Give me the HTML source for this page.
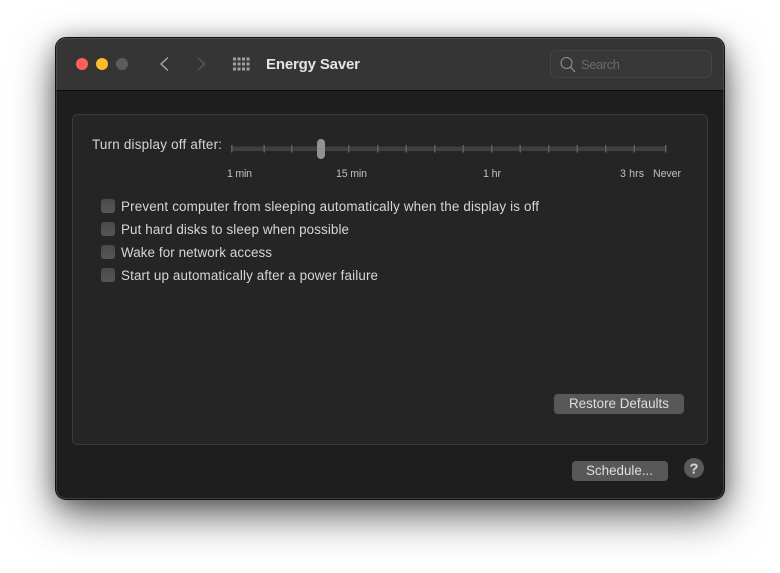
<!DOCTYPE html>
<html><head><meta charset="utf-8"><title>Energy Saver</title>
<style>
html,body{margin:0;padding:0;background:#fff;width:780px;height:573px;overflow:hidden}
#win{position:absolute;left:56px;top:38px;width:668px;height:461px;border-radius:10px;background:#1e1e1e;box-shadow:0 16px 42px rgba(0,0,0,.62),0 2px 20px rgba(0,0,0,.3)}
svg{position:absolute;left:0;top:0}
text{font-family:"Liberation Sans",sans-serif;font-size:13.4px;fill:#d6d6d6}
.s{font-size:10.6px;fill:#c0c0c0}
</style></head><body>
<div id="win"></div>
<svg width="780" height="573" viewBox="0 0 780 573">
<defs>
<clipPath id="w"><rect x="56" y="38" width="668" height="461" rx="10"/></clipPath>
<linearGradient id="cb" x1="0" y1="0" x2="0" y2="1"><stop offset="0" stop-color="#4a4a4a"/><stop offset="1" stop-color="#565656"/></linearGradient>
</defs>
<g clip-path="url(#w)">
<rect x="56" y="38" width="668" height="52" fill="#353535"/>
<rect x="56" y="90" width="668" height="1" fill="#0c0c0c"/>
<rect x="56" y="91" width="668" height="408" fill="#1e1e1e"/>
</g>
<rect x="55.500" y="37.500" width="669" height="462" rx="10.500" fill="none" stroke="#111" stroke-width="1"/>
<rect x="56.500" y="38.500" width="667" height="460" rx="9.500" fill="none" stroke="#5a5a5a" stroke-opacity=".55" stroke-width="1"/>

<!-- traffic lights -->
<circle cx="82" cy="64" r="6" fill="#fe5f57"/>
<circle cx="102" cy="64" r="6" fill="#fdbc2e"/>
<circle cx="122" cy="64" r="6" fill="#5c5c5c"/>

<!-- nav -->
<path d="M168 57.500 L161 64 L168 70.500" fill="none" stroke="#a8a8a8" stroke-width="1.400"/>
<path d="M197.500 57.500 L204.500 64 L197.500 70.500" fill="none" stroke="#565656" stroke-width="1.400"/>
<g fill="#a0a0a0">
<rect x="233" y="57.500" width="3" height="3"/><rect x="237.500" y="57.500" width="3" height="3"/><rect x="242" y="57.500" width="3" height="3"/><rect x="246.500" y="57.500" width="3" height="3"/>
<rect x="233" y="62.500" width="3" height="3"/><rect x="237.500" y="62.500" width="3" height="3"/><rect x="242" y="62.500" width="3" height="3"/><rect x="246.500" y="62.500" width="3" height="3"/>
<rect x="233" y="67.500" width="3" height="3"/><rect x="237.500" y="67.500" width="3" height="3"/><rect x="242" y="67.500" width="3" height="3"/><rect x="246.500" y="67.500" width="3" height="3"/>
</g>
<text x="266" y="69" textLength="94" lengthAdjust="spacing" style="font-size:15px;font-weight:700;fill:#e4e4e4">Energy Saver</text>

<!-- search -->
<rect x="550.500" y="50.500" width="161" height="27" rx="6" fill="#383838" stroke="#444"/>
<circle cx="566.500" cy="63" r="5.500" fill="none" stroke="#909090" stroke-width="1.100"/>
<path d="M570.500 67 L575 72" stroke="#909090" stroke-width="1.300"/>
<text x="581" y="69" textLength="39" lengthAdjust="spacing" style="font-size:13px;fill:#6a6a6a">Search</text>

<!-- panel -->
<rect x="72.500" y="114.500" width="635" height="330" rx="5" fill="#252525" stroke="#3c3c3c"/>

<text x="92" y="149" textLength="130" lengthAdjust="spacing">Turn display off after:</text>

<!-- slider -->
<rect x="231" y="146.500" width="435" height="4.500" rx="1.500" fill="#404040"/>
<g fill="#606060">
<rect x="231" y="145" width="1.500" height="7.500"/><rect x="263.500" y="145" width="1.500" height="7.500"/><rect x="291" y="145" width="1.500" height="7.500"/>
<rect x="348" y="145" width="1.500" height="7.500"/><rect x="377" y="145" width="1.500" height="7.500"/><rect x="405.500" y="145" width="1.500" height="7.500"/>
<rect x="434" y="145" width="1.500" height="7.500"/><rect x="462.500" y="145" width="1.500" height="7.500"/><rect x="491" y="145" width="1.500" height="7.500"/>
<rect x="519.500" y="145" width="1.500" height="7.500"/><rect x="548" y="145" width="1.500" height="7.500"/><rect x="576.500" y="145" width="1.500" height="7.500"/>
<rect x="605" y="145" width="1.500" height="7.500"/><rect x="633.500" y="145" width="1.500" height="7.500"/><rect x="665" y="145" width="1.500" height="7.500"/>
</g>
<rect x="317" y="139" width="8" height="20" rx="4" fill="#929292"/>

<text class="s" x="227" y="177" textLength="25" lengthAdjust="spacing">1 min</text>
<text class="s" x="336" y="177" textLength="31" lengthAdjust="spacing">15 min</text>
<text class="s" x="483" y="177" textLength="18" lengthAdjust="spacing">1 hr</text>
<text class="s" x="620" y="177" textLength="24" lengthAdjust="spacing">3 hrs</text>
<text class="s" x="653" y="177" textLength="28" lengthAdjust="spacing">Never</text>

<!-- checkboxes -->
<rect x="101" y="199" width="14" height="14" rx="3" fill="url(#cb)"/>
<rect x="101" y="222" width="14" height="14" rx="3" fill="url(#cb)"/>
<rect x="101" y="245" width="14" height="14" rx="3" fill="url(#cb)"/>
<rect x="101" y="268" width="14" height="14" rx="3" fill="url(#cb)"/>
<text x="121" y="211" textLength="418" lengthAdjust="spacing">Prevent computer from sleeping automatically when the display is off</text>
<text x="121" y="234" textLength="228" lengthAdjust="spacing">Put hard disks to sleep when possible</text>
<text x="121" y="257" textLength="151" lengthAdjust="spacing">Wake for network access</text>
<text x="121" y="280" textLength="257" lengthAdjust="spacing">Start up automatically after a power failure</text>

<!-- buttons -->
<rect x="554" y="394" width="130" height="20" rx="4" fill="#585858"/>
<text x="569" y="408" textLength="100" lengthAdjust="spacing" style="fill:#dedede">Restore Defaults</text>
<rect x="572" y="461" width="96" height="20" rx="4" fill="#585858"/>
<text x="586" y="475" textLength="67" lengthAdjust="spacing" style="fill:#dedede">Schedule...</text>
<circle cx="694" cy="468" r="10" fill="#5a5a5a"/>
<text x="694" y="473.500" text-anchor="middle" style="font-size:15px;font-weight:700;fill:#d8d8d8">?</text>
</svg>
</body></html>
